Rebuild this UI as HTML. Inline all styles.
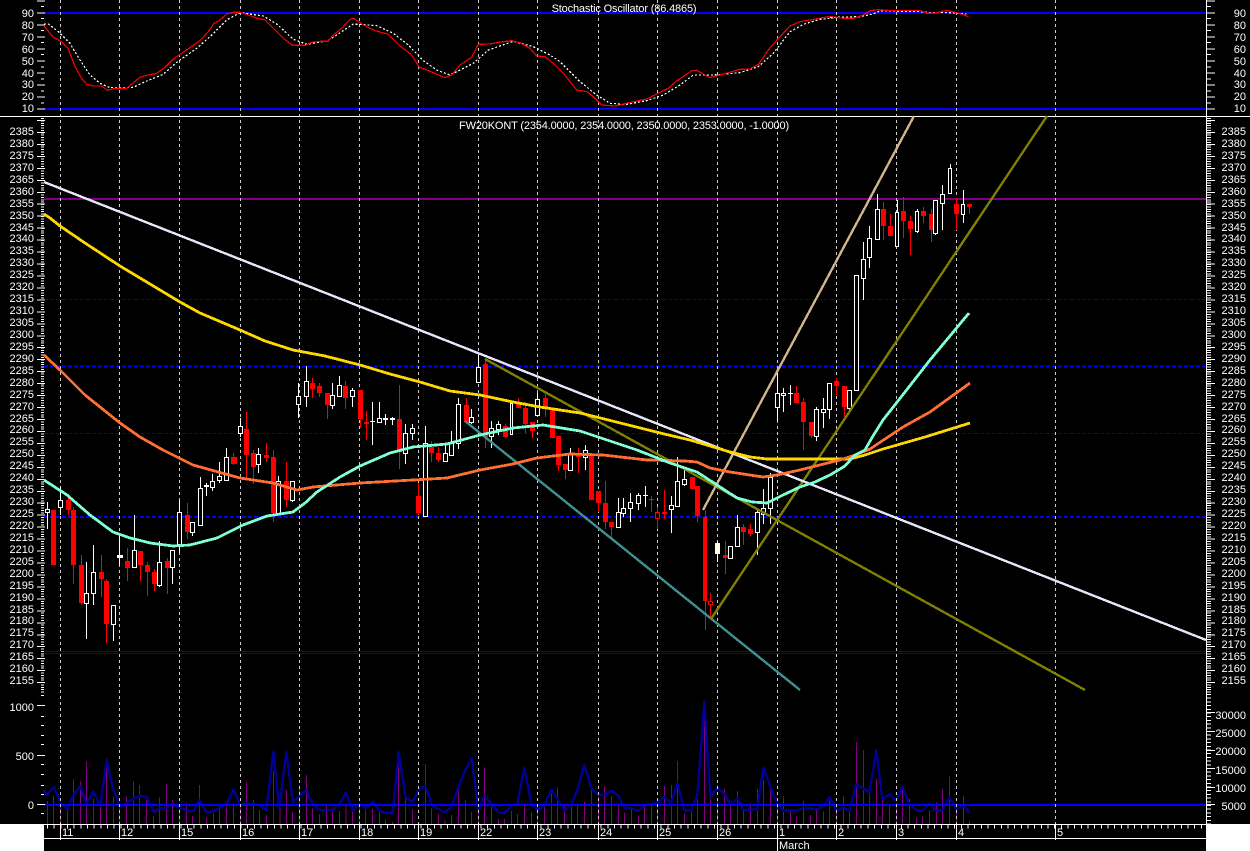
<!DOCTYPE html>
<html><head><meta charset="utf-8"><title>Chart</title>
<style>
html,body{margin:0;padding:0;background:#000}
#w{position:relative;width:1250px;height:851px;overflow:hidden;background:#000;font:11px "Liberation Sans",sans-serif;color:#fff}
svg{position:absolute;left:0;top:0}
.c{position:absolute;white-space:pre;line-height:11.93px}
.l{left:0;width:34px;text-align:right}
.r{left:1200px;width:46px;text-align:right}
.a{position:absolute;line-height:12px}
</style></head><body><div id="w">
<svg width="1250" height="851" viewBox="0 0 1250 851" shape-rendering="crispEdges" fill="none">
<rect x="0" y="824" width="44" height="27" fill="#fff"/>
<rect x="1206" y="824" width="44" height="27" fill="#fff"/>
<!-- volume bars -->
<g stroke="#800080" stroke-width="3">
<g transform="translate(0,650) scale(.33333)"><path d="M142 453V522M160 438V522M181 465V522M202 480V522M220 387V522M241 395V522M259 335V522M280 445V522M301 470V522M320 325V522M340 440V522M359 470V522M380 440V522M400 395V522M418 405V522M440 450V522M460 498V522M478 443V522M500 402V522M518 450V522M538 462V522M559 460V522M577 498V522M598 405V522M619 503V522M640 490V522M658 460V522M680 467V522M700 460V522M721 468V522M740 395V522M760 450V522M778 480V522M799 495V522M820 362V522M840 470V522M859 420V522M878 485V522M898 413V522M919 375V522M938 475V522M958 492V522M980 465V522M998 485V522M1019 483V522M1038 460V522M1058 470V522M1078 460V522M1096 480V522M1118 477V522M1138 485V522M1156 507V522M1178 516V522M1196 340V522M1217 445V522M1237 478V522"/></g>
<g transform="translate(420,650) scale(.33333)"><path d="M16 342V522M34 475V522M55 492V522M75 510V522M95 495V522M115 418V522M136 450V522M155 486V522M175 470V522M193 353V522M214 470V522M235 507V522M253 507V522M274 483V522M292 492V522M313 465V522M334 486V522M352 465V522M373 470V522M394 430V522M412 413V522M433 465V522M454 465V522M472 465V522M493 456V522M514 418V522M535 440V522M553 408V522M574 440V522M595 460V522M613 488V522M634 472V522M655 497V522M673 467V522M694 460V522M712 460V522M733 408V522M754 405V522M772 333V522M794 490V522M814 485V522M832 447V522M853 212V522M871 445V522M892 455V522M913 417V522M932 468V522M952 423V522M970 483V522M991 468V522M1012 417V522M1030 390V522M1051 415V522M1073 460V522M1090 438V522M1111 483V522M1129 500V522M1150 453V522M1171 495V522M1190 480V522M1211 485V522M1228 450V522"/></g>
<g transform="translate(830,650) scale(.33333)"><path d="M19 470V522M40 440V522M58 485V522M79 276V522M100 300V522M118 430V522M139 385V522M157 445V522M178 468V522M199 460V522M217 408V522M238 445V522M259 503V522M277 500V522M298 483V522M319 458V522M337 417V522M358 380V522M380 460V522M400 437V522M418 513V522"/></g>
</g>
<!-- volume average -->
<g stroke="#000096" stroke-width="7" stroke-linejoin="round">
<polyline transform="translate(0,650) scale(.33333)" points="132,420 140,435 162,410 181,460 203,477 220,435 241,408 259,460 280,425 301,467 320,330 340,420 362,470 400,447 420,437 440,440 462,487 478,475 500,475 520,462 560,482 580,482 598,450 619,487 640,484 680,462 700,418 721,467 740,460 778,465 799,480 820,305 838,475 859,305 878,455 919,420 938,462 960,480 998,480 1019,462 1038,427 1058,482 1078,462 1098,475 1118,455 1138,482 1158,490 1178,490 1196,305 1217,443 1237,455 1260,415"/>
<polyline transform="translate(420,650) scale(.33333)" points="0,415 16,408 37,467 75,487 95,470 115,410 136,360 155,325 175,480 193,438 214,460 235,487 253,490 274,467 292,462 313,353 334,462 352,480 373,467 394,418 433,480 454,462 472,420 493,345 514,415 535,435 553,435 574,422 595,437 613,475 634,475 655,483 673,465 694,462 712,458 733,442 754,458 772,400 794,483 814,480 832,435 853,155 871,442 892,413 913,432 932,463 952,445 970,480 1012,478 1030,353 1051,410 1073,463 1090,482 1111,480 1129,483 1150,473 1190,478 1211,468 1228,441 1249,478"/>
<polyline transform="translate(830,650) scale(.33333)" points="-3,443 19,482 40,473 58,482 79,403 118,427 139,300 157,447 178,433 199,452 217,410 238,463 259,480 277,483 298,460 319,483 337,480 358,443 380,478 400,465 418,488"/>
</g>
<!-- horizontal lines -->
<g>
<rect x="44" y="12" width="1162" height="2" fill="#00f"/>
<rect x="44" y="108" width="1162" height="2" fill="#00f"/>
<rect x="0" y="116" width="1250" height="1" fill="#fff"/>
<rect x="44" y="198" width="1162" height="2" fill="#800080"/>
<rect x="44" y="651" width="1162" height="1" fill="#00c"/><rect x="44" y="653" width="1162" height="1" fill="#00c"/>
<rect x="44" y="804" width="1162" height="2" fill="#00f"/>
<path d="M44 299.5H1206M44 433.5H1206" stroke="#0000b4" stroke-dasharray="4 2"/>
<path d="M44 366.5H1206M44 517H1206" stroke="#00f" stroke-width="2" stroke-dasharray="4 2"/>
</g>
<!-- bottom axis -->
<path d="M44 824.5H1206M44 838.5H1206" stroke="#fff"/>
<path d="M47 826.5H1206" stroke="#fff" stroke-width="4" stroke-dasharray="1 5.67"/>
<!-- grid -->
<path stroke="#ccc" stroke-dasharray="3 3" d="M60.5 0V824M119.5 0V824M179.5 0V824M240.5 0V824M299.5 0V824M359.5 0V824M418.5 0V824M478.5 0V824M537.5 0V824M598.5 0V824M657.5 0V824M717.5 0V824M777.5 0V824M836.5 0V824M896.5 0V824M956.5 0V824M1055.5 0V824"/>
<path stroke="#fff" d="M60.5 824V840M119.5 824V840M179.5 824V840M240.5 824V840M299.5 824V840M359.5 824V840M418.5 824V840M478.5 824V840M537.5 824V840M598.5 824V840M657.5 824V840M717.5 824V840M777.5 824V851M836.5 824V840M896.5 824V840M956.5 824V840M1055.5 824V840"/>
<!-- axes ticks -->
<g stroke="#fff">
<path d="M1206.5 0V824"/>
<path d="M41 0V110" stroke-width="8" stroke-dasharray="1 11.05" stroke-dashoffset="-.3"/>
<path d="M42.5 6V110" stroke-width="3" stroke-dasharray="1 11.05"/>
<path d="M42.5 118V694" stroke-width="3" stroke-dasharray="1 1.39"/>
<path d="M41 120V694" stroke-width="8" stroke-dasharray="1 10.96"/>
<path d="M41 705.5H45M37 705.5H45M37 755.5H45M37 804.5H45" stroke-width="1"/>
<path d="M41 695.5H44M41 716.5H44M41 725.5H44M41 735.5H44M41 744.5H44M41 764.5H44M41 774.5H44M41 785.5H44M41 794.5H44M41 813.5H44" stroke-width="1"/>
<path d="M1211 0V110" stroke-width="8" stroke-dasharray="1 11.05" stroke-dashoffset="-.3"/>
<path d="M1209 6V110" stroke-width="4" stroke-dasharray="1 11.05"/>
<path d="M1209 118V694" stroke-width="4" stroke-dasharray="1 1.39"/>
<path d="M1211 120V694" stroke-width="8" stroke-dasharray="1 10.96"/>
<path d="M1209 694V824" stroke-width="4" stroke-dasharray="1 2.7"/>
<path d="M1211 712.5H1207M1215 712.5H1207M1215 731.5H1207M1215 750.5H1207M1215 768.5H1207M1215 787.5H1207M1215 804.5H1207"/>
</g>
<!-- stochastic -->
<g transform="scale(.33333)" stroke-width="3.6">
<polyline stroke="#fff" stroke-dasharray="6 6" points="132,72 145,72 175,95 210,130 240,180 270,225 300,250 330,263 400,262 440,243 490,223 530,187 590,145 630,110 680,60 720,38 790,48 830,72 880,118 920,133 985,122 1040,85 1060,72 1130,77 1180,100 1225,135 1270,182"/>
<polyline stroke="#f00" points="132,78 160,112 185,125 205,147 225,200 245,235 260,253 280,258 305,258 322,271 345,265 380,265 400,248 420,232 440,226 470,220 495,202 520,177 545,160 570,143 600,122 625,95 640,72 660,60 680,42 700,37 720,37 750,47 770,54 795,60 825,90 850,115 878,136 915,136 935,127 960,124 985,124 1000,105 1025,85 1050,58 1060,55 1075,65 1100,80 1125,92 1165,103 1200,138 1235,165 1260,205"/>
<g transform="translate(1260,0)">
<polyline stroke="#fff" stroke-dasharray="6 6" points="10,182 50,210 90,225 130,205 160,190 205,150 280,124 340,140 390,165 420,185 480,245 530,285 570,310 620,313 680,302 730,285 780,255 820,225 880,225 960,218 1015,200 1060,160 1110,95 1150,73 1200,58 1260,52"/>
<polyline stroke="#f00" points="0,202 40,218 75,233 95,225 120,195 155,172 175,133 210,132 235,127 275,122 300,128 330,145 350,168 375,170 400,190 430,220 470,270 500,275 520,290 545,315 585,318 640,305 680,297 745,265 770,243 815,212 830,211 870,233 925,218 960,208 990,207 1015,193 1045,150 1075,115 1110,78 1140,65 1180,58 1225,50 1260,53"/>
</g>
<g transform="translate(2490,0)">
<polyline stroke="#fff" stroke-dasharray="6 6" points="0,52 90,50 130,42 150,33 260,34 300,38 340,37 410,42"/>
<polyline stroke="#f00" points="0,49 40,55 70,55 100,45 120,32 145,29 170,31 270,32 295,40 320,38 350,31 370,36 395,42 415,50"/>
</g>
</g>
<!-- wicks -->
<path stroke="#fff" d="M47.5 502V529M60.5 487V515M86.5 562V639M93.5 545V605M113.5 605V641M119.5 536V565M134.5 515V567M159.5 541V587M172.5 550V584M179.5 500V553M192.5 522V536M200.5 477V525M206.5 483V496M212.5 474V491M219.5 462V483M226.5 448V480M240.5 418V437M258.5 448V473M278.5 476V513M292.5 481V502M298.5 383V418M306.5 366V407M332.5 383V409M339.5 376V397M352.5 388V407M372.5 402V445M379.5 402V422M385.5 414V425M392.5 417V425M405.5 424V464M412.5 424V440M425.5 426V516M445.5 445V461M451.5 431V455M458.5 398V449M471.5 409V424M478.5 355V382M491.5 421V448M498.5 421V435M511.5 402V434M537.5 393V415M570.5 448V470M585.5 445V470M618.5 498V527M623.5 498V517M630.5 493V522M638.5 493V510M645.5 486V507M671.5 496V533M677.5 457V506M684.5 470V486M717.5 541V562M730.5 546V558M737.5 515V547M757.5 508V555M763.5 489V524M770.5 473V524M777.5 372V421M783.5 388V412M790.5 385V405M816.5 407V441M823.5 398V428M829.5 383V419M849.5 390V410M856.5 275V390M863.5 242V300M869.5 226V268M877.5 194V239M897.5 200V247M917.5 209V233M935.5 200V235M942.5 185V230M950.5 164V193M963.5 190V223"/>
<path stroke="#f00" d="M68.5 497V515M73.5 507V584M81.5 555V605M101.5 555V597M106.5 579V643M127.5 548V581M140.5 551V581M147.5 562V596M154.5 569V591M167.5 558V594M187.5 503V539M233.5 453V465M246.5 412V478M253.5 450V484M266.5 443V462M273.5 450V522M286.5 462V507M312.5 378V398M319.5 383V397M327.5 393V419M345.5 381V409M360.5 390V428M366.5 411V440M399.5 385V469M418.5 483V515M431.5 441V462M438.5 447V462M466.5 398V422M485.5 360V448M505.5 424V438M518.5 398V408M525.5 402V433M532.5 422V438M545.5 393V417M558.5 436V471M565.5 464V479M578.5 448V473M598.5 491V512M605.5 481V529M611.5 522V538M651.5 496V512M657.5 507V529M664.5 490V519M697.5 486V522M705.5 510V630M710.5 593V617M725.5 541V574M743.5 524V545M750.5 524V536M796.5 386V403M803.5 398V450M811.5 422V438M836.5 378V395M844.5 386V417M883.5 202V240M890.5 214V236M903.5 197V238M910.5 216V255M923.5 207V223M931.5 209V242M956.5 198V230M969.5 204V214"/>
<!-- red bodies -->
<path fill="#f00" d="M51 510h5v55h-5zM66 500h5v10h-5zM71 510h5v55h-5zM79 565h5v38h-5zM99 572h5v7h-5zM104 581h5v43h-5zM125 561h5v7h-5zM138 551h5v14h-5zM145 565h5v7h-5zM152 572h5v12h-5zM165 561h5v7h-5zM185 515h5v17h-5zM231 457h6v7h-6zM244 429h5v26h-5zM251 453h5v14h-5zM264 455h5v3h-5zM271 457h5v56h-5zM284 481h5v19h-5zM310 383h5v6h-5zM317 386h5v7h-5zM325 393h5v12h-5zM343 386h5v12h-5zM358 390h5v29h-5zM364 422h5v2h-5zM397 419h5v33h-5zM416 496h5v17h-5zM429 447h5v6h-5zM436 453h5v7h-5zM464 405h5v17h-5zM483 364h5v73h-5zM503 426h5v11h-5zM516 402h5v6h-5zM523 408h5v16h-5zM530 422h5v9h-5zM543 398h5v9h-5zM550 409h5v29h-5zM556 436h5v29h-5zM563 464h5v6h-5zM576 453h5v4h-5zM589 454h5v46h-5zM596 491h5v12h-5zM603 503h5v19h-5zM609 522h5v5h-5zM649 499h5v1h-5zM662 512h5v2h-5zM690 477h5v12h-5zM695 486h5v30h-5zM703 517h4v84h-4zM723 555h5v3h-5zM741 527h5v5h-5zM748 529h5v5h-5zM794 393h5v10h-5zM801 402h5v20h-5zM809 422h5v14h-5zM834 381h5v5h-5zM842 386h5v21h-5zM881 209h5v17h-5zM888 226h5v10h-5zM901 211h5v10h-5zM908 221h5v8h-5zM921 211h5v5h-5zM929 214h5v16h-5zM954 204h5v10h-5zM967 204h5v3h-5z"/>
<path fill="#000" stroke="#f00" d="M655.5 512.5h4v6h-4zM708.5 601.5h4v3h-4z"/>
<!-- white bodies -->
<path fill="#000" stroke="#fff" d="M45.5 509.5h4v3h-4zM58.5 500.5h4v7h-4zM84.5 593.5h4v10h-4zM91.5 572.5h4v21h-4zM111.5 605.5h4v19h-4zM132.5 550.5h4v17h-4zM157.5 562.5h4v23h-4zM170.5 550.5h4v17h-4zM177.5 512.5h4v32h-4zM190.5 522.5h4v10h-4zM198.5 488.5h4v37h-4zM210.5 481.5h4v6h-4zM217.5 476.5h4v4h-4zM224.5 457.5h4v23h-4zM238.5 426.5h4v7h-4zM256.5 454.5h4v10h-4zM276.5 481.5h4v32h-4zM290.5 481.5h4v19h-4zM296.5 396.5h4v8h-4zM304.5 381.5h4v15h-4zM330.5 395.5h4v10h-4zM337.5 385.5h4v11h-4zM350.5 390.5h4v6h-4zM377.5 418.5h4v4h-4zM403.5 433.5h4v20h-4zM410.5 428.5h4v5h-4zM423.5 443.5h4v73h-4zM443.5 453.5h4v8h-4zM449.5 443.5h4v12h-4zM456.5 404.5h4v39h-4zM469.5 417.5h4v5h-4zM476.5 367.5h4v15h-4zM489.5 428.5h4v8h-4zM496.5 424.5h4v5h-4zM535.5 399.5h4v16h-4zM568.5 453.5h4v17h-4zM583.5 450.5h4v7h-4zM616.5 512.5h4v15h-4zM621.5 508.5h4v5h-4zM628.5 502.5h4v6h-4zM636.5 495.5h4v8h-4zM669.5 505.5h4v4h-4zM675.5 481.5h4v25h-4zM682.5 479.5h4v5h-4zM728.5 546.5h4v12h-4zM735.5 527.5h4v19h-4zM755.5 512.5h4v20h-4zM761.5 508.5h4v6h-4zM768.5 477.5h4v31h-4zM775.5 393.5h4v14h-4zM781.5 393.5h4v2h-4zM814.5 409.5h4v27h-4zM821.5 409.5h4v3h-4zM827.5 383.5h4v26h-4zM847.5 390.5h4v18h-4zM854.5 275.5h4v115h-4zM861.5 259.5h4v19h-4zM867.5 238.5h4v19h-4zM875.5 209.5h4v30h-4zM895.5 212.5h3v34h-3zM915.5 211.5h3v20h-3zM933.5 200.5h4v33h-4zM940.5 194.5h4v9h-4zM948.5 168.5h3v25h-3zM961.5 204.5h3v10h-3zM510.5 403.5h2v31h-2z"/>
<!-- dojis / solid -->
<path fill="#fff" d="M117 555h6v3h-6zM204 485h5v2h-5zM370 421h5v1h-5zM383 418h5v2h-5zM390 418h5v2h-5zM643 495h5v1h-5zM788 393h5v1h-5z"/>
<path fill="#fffde8" d="M715 543h5v11h-5z"/>
<!-- trend lines -->
<g stroke-width="2.4" stroke-linejoin="round">
<path stroke="#40908f" d="M465 421L800 690"/>
<path stroke="#808000" d="M485 359L1085 690M711 619L1047 116"/>
<path stroke="#d2b48c" d="M703 510L914 116"/>
<path stroke="#e6e6fa" d="M44 182L1206 640"/>
<polyline stroke="#ffd700" stroke-width="2.8" points="44,214 50,218 60,226 85,243 120,266 160,290 180,302 200,313 240,330 265,341 293,350 325,356 360,365 390,374 420,382 450,391 480,395 513,402 540,407 580,413 620,423 660,433 690,440 710,446 730,452 750,457 767,459 800,459 850,459 865,455 883,449 925,437 970,423"/>
<polyline stroke="#ff6e32" stroke-width="2.8" points="44,355 60,370 85,395 120,423 140,437 163,450 193,465 240,478 273,483 297,490 313,487 360,483 413,480 447,478 480,470 513,464 537,458 570,454 603,455 647,460 685,461 697,462 710,468 730,472 763,477 777,475 800,470 840,460 855,455 870,449 885,439 903,427 930,412 970,383"/>
<polyline stroke="#7fffd4" stroke-width="2.8" points="44,480 67,495 90,515 113,532 130,538 150,543 173,546 190,545 217,538 243,525 267,516 293,512 305,503 317,492 340,477 360,466 390,453 413,447 447,444 480,435 513,428 543,425 580,431 607,440 637,450 670,463 697,472 717,485 737,498 752,502 767,503 783,495 800,487 815,482 830,475 845,466 855,455 865,450 873,436 883,420 905,392 930,360 969,313"/>
</g>
</svg>
<div class="a" style="left:440px;width:368px;top:3px;text-align:center;letter-spacing:-.16px">Stochastic Oscillator (86.4865)</div>
<div class="a" style="left:424px;width:400px;top:120px;text-align:center;letter-spacing:-.16px">FW20KONT (2354.0000, 2354.0000, 2350.0000, 2353.0000, -1.0000)</div>
<div class="c l" style="top:9px;line-height:11.9px">90
80
70
60
50
40
30
20
10</div>
<div class="c r" style="top:9px;line-height:11.9px">90
80
70
60
50
40
30
20
10</div>
<div class="c l" style="top:127px">2385
2380
2375
2370
2365
2360
2355
2350
2345
2340
2335
2330
2325
2320
2315
2310
2305
2300
2295
2290
2285
2280
2275
2270
2265
2260
2255
2250
2245
2240
2235
2230
2225
2220
2215
2210
2205
2200
2195
2190
2185
2180
2175
2170
2165
2160
2155</div>
<div class="c r" style="top:127px">2385
2380
2375
2370
2365
2360
2355
2350
2345
2340
2335
2330
2325
2320
2315
2310
2305
2300
2295
2290
2285
2280
2275
2270
2265
2260
2255
2250
2245
2240
2235
2230
2225
2220
2215
2210
2205
2200
2195
2190
2185
2180
2175
2170
2165
2160
2155</div>
<div class="a l" style="top:702px;left:0;width:34px;text-align:right">1000</div>
<div class="a l" style="top:751px;left:0;width:34px;text-align:right">500</div>
<div class="a l" style="top:800px;left:0;width:34px;text-align:right">0</div>
<div class="a r" style="top:710px">30000</div>
<div class="a r" style="top:728px">25000</div>
<div class="a r" style="top:746px">20000</div>
<div class="a r" style="top:765px">15000</div>
<div class="a r" style="top:783px">10000</div>
<div class="a r" style="top:801px">5000</div>
<div class="a" style="left:62px;top:827px">11</div>
<div class="a" style="left:121px;top:827px">12</div>
<div class="a" style="left:181px;top:827px">15</div>
<div class="a" style="left:242px;top:827px">16</div>
<div class="a" style="left:301px;top:827px">17</div>
<div class="a" style="left:361px;top:827px">18</div>
<div class="a" style="left:420px;top:827px">19</div>
<div class="a" style="left:480px;top:827px">22</div>
<div class="a" style="left:539px;top:827px">23</div>
<div class="a" style="left:600px;top:827px">24</div>
<div class="a" style="left:659px;top:827px">25</div>
<div class="a" style="left:719px;top:827px">26</div>
<div class="a" style="left:779px;top:827px">1</div>
<div class="a" style="left:838px;top:827px">2</div>
<div class="a" style="left:898px;top:827px">3</div>
<div class="a" style="left:958px;top:827px">4</div>
<div class="a" style="left:1057px;top:827px">5</div>
<div class="a" style="left:779px;top:840px">March</div>
</div></body></html>
